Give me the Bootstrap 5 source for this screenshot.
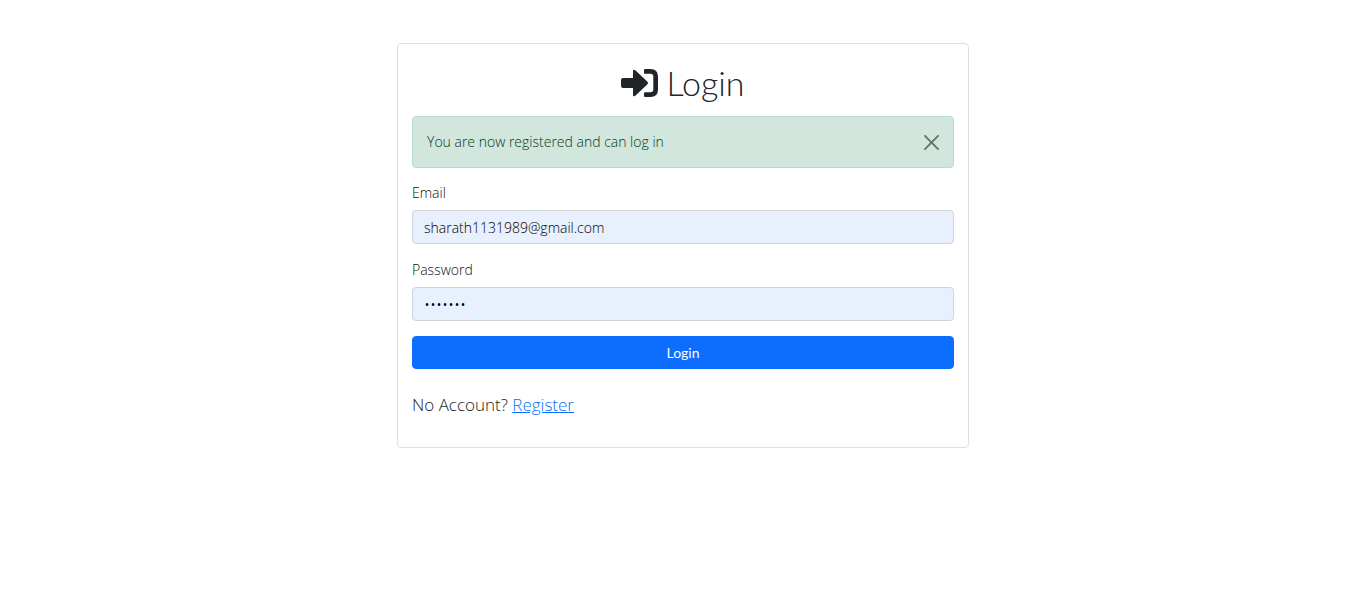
<!DOCTYPE html>
<html lang="en">
<head>
<meta charset="utf-8">
<meta name="viewport" content="width=device-width, initial-scale=1">
<title>Login</title>
<link href="https://cdn.jsdelivr.net/npm/bootstrap@5.3.0/dist/css/bootstrap.min.css" rel="stylesheet">
<style>
  body { font-family: "Open Sans", "Noto Sans", sans-serif; font-size: 14px; line-height: 22px; font-weight: 300; color: #111; }
  .page { max-width: 1192px; padding-top: 43px; }
  .login-card { padding: 14px; border-color: #dfdfdf; border-radius: 4px; color: #111; }
  h1, .btn { font-family: Lato, "Open Sans", sans-serif; }
  h1 { font-size: 34px; line-height: 44px; font-weight: 300; margin: 3px 0 11px; gap: 8px; color: #212529; }
  .alert { padding: 14px; margin-bottom: 14px; border-radius: 4px; color: #063820; background: #d1e7dd; border-color: #badbcc; }
  .alert .btn-close { padding: 18px 14px; background-size: 15px; width: 15px; height: 15px; }
  .field { margin-bottom: 15px; }
  .field label { display: block; margin-bottom: 6px; }
  .field .form-control { font-size: 14px; line-height: 22px; font-weight: 300; padding: 6px 11px 4px; border-color: #ced4da; border-radius: 4px; background: #e8f0fe; color: #000; }
  .field .form-control[type="password"] { font-size: 16px; }
  .btn-primary { font-size: 14px; line-height: 21px; padding: 5px 11px; border-radius: 4px; }
  .register { font-size: 17px; line-height: 27px; margin: 22px 0 15px; color: #212529; }
</style>
</head>
<body>
<main class="container page">
  <div class="row justify-content-center">
    <div class="col-md-6">
      <div class="card login-card">
        <h1 class="d-flex justify-content-center align-items-center">
          <svg width="37" height="28" viewBox="0 0 37 28" fill="currentColor" aria-hidden="true">
            <path d="M2 9H12V2Q12.300 0 14 1L26.500 12.800Q27.500 14 26.500 15.200L14 27Q12.300 28 12 26V19H2Q0 19 0 17V11Q0 9 2 9Z"/>
            <path d="M24 0H29.500Q37 0 37 7.500V20.500Q37 28 29.500 28H24Q23 28 23 27V24.300Q23 23.300 24 23.300H29.500Q32.300 23.300 32.300 20.500V7.500Q32.300 4.700 29.500 4.700H24Q23 4.700 23 3.700V1Q23 0 24 0Z"/>
          </svg>
          Login
        </h1>
        <div class="alert alert-success alert-dismissible fade show" role="alert">
          You are now registered and can log in
          <button type="button" class="btn-close" data-bs-dismiss="alert" aria-label="Close"></button>
        </div>
        <form>
          <div class="field">
            <label for="email">Email</label>
            <input type="email" id="email" class="form-control" value="sharath1131989@gmail.com">
          </div>
          <div class="field">
            <label for="password">Password</label>
            <input type="password" id="password" class="form-control" value="secret7">
          </div>
          <button type="submit" class="btn btn-primary w-100 d-block">Login</button>
        </form>
        <p class="register">No Account? <a href="#register">Register</a></p>
      </div>
    </div>
  </div>
</main>
<script src="https://cdn.jsdelivr.net/npm/bootstrap@5.3.0/dist/js/bootstrap.bundle.min.js"></script>
</body>
</html>
